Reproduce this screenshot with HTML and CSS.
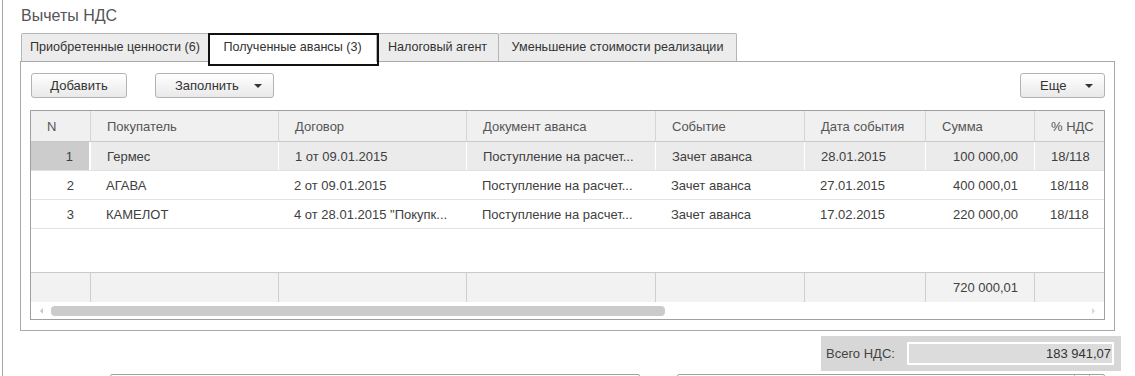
FILE: index.html
```html
<!DOCTYPE html>
<html lang="ru">
<head>
  <meta charset="UTF-8">
  <title>Вычеты НДС</title>
  <link rel="stylesheet" href="styles.css">
</head>
<body>
  <div class="page">
    <h1 class="title">Вычеты НДС</h1>

    <!-- Tabs -->
    <div class="tabs">
      <div class="tab tab-1">Приобретенные ценности (6)</div>
      <div class="tab tab-2 active">Полученные авансы (3)</div>
      <div class="tab tab-3">Налоговый агент</div>
      <div class="tab tab-4">Уменьшение стоимости реализации</div>
    </div>

    <div class="panel">
      <!-- Command bar -->
      <div class="toolbar">
        <button class="btn btn-add">Добавить</button>
        <button class="btn btn-fill">Заполнить <span class="arrow"></span></button>
        <button class="btn btn-more">Еще <span class="arrow"></span></button>
      </div>

      <!-- Advances table -->
      <div class="grid">
        <div class="row head">
          <div class="cell">N</div>
          <div class="cell">Покупатель</div>
          <div class="cell">Договор</div>
          <div class="cell">Документ аванса</div>
          <div class="cell">Событие</div>
          <div class="cell">Дата события</div>
          <div class="cell">Сумма</div>
          <div class="cell">% НДС</div>
        </div>
        <div class="row selected">
          <div class="cell num">1</div>
          <div class="cell">Гермес</div>
          <div class="cell">1 от 09.01.2015</div>
          <div class="cell">Поступление на расчет...</div>
          <div class="cell">Зачет аванса</div>
          <div class="cell">28.01.2015</div>
          <div class="cell num">100 000,00</div>
          <div class="cell">18/118</div>
        </div>
        <div class="row">
          <div class="cell num">2</div>
          <div class="cell">АГАВА</div>
          <div class="cell">2 от 09.01.2015</div>
          <div class="cell">Поступление на расчет...</div>
          <div class="cell">Зачет аванса</div>
          <div class="cell">27.01.2015</div>
          <div class="cell num">400 000,01</div>
          <div class="cell">18/118</div>
        </div>
        <div class="row">
          <div class="cell num">3</div>
          <div class="cell">КАМЕЛОТ</div>
          <div class="cell">4 от 28.01.2015 "Покупк...</div>
          <div class="cell">Поступление на расчет...</div>
          <div class="cell">Зачет аванса</div>
          <div class="cell">17.02.2015</div>
          <div class="cell num">220 000,00</div>
          <div class="cell">18/118</div>
        </div>
        <div class="empty"></div>
        <div class="row foot">
          <div class="cell"></div>
          <div class="cell"></div>
          <div class="cell"></div>
          <div class="cell"></div>
          <div class="cell"></div>
          <div class="cell"></div>
          <div class="cell num">720 000,01</div>
          <div class="cell"></div>
        </div>
        <div class="scrollbar">
          <span class="scroll-left"></span>
          <span class="thumb"></span>
          <span class="scroll-right"></span>
        </div>
      </div>
    </div>

    <!-- Total -->
    <div class="totals">
      <div class="total-box">
        <span class="total-label">Всего НДС:</span>
        <span class="total-value">183 941,07</span>
      </div>
    </div>

    <div class="fields">
      <div class="field field-left"></div>
      <div class="field field-right">
        <span class="field-btn"></span>
        <span class="field-btn"></span>
      </div>
    </div>
  </div>
</body>
</html>
```

FILE: styles.css
```css
/* Global reset */
* {
  margin: 0;
  padding: 0;
  box-sizing: border-box;
}

body {
  font-family: 'Liberation Sans', Arial, sans-serif;
  font-size: 13px;
  color: #404040;
  background: #fff;
  overflow: hidden;
}

.page {
  margin-left: 2px;
  border-left: 1px solid #a6a6a6;
  height: 376px;
  padding: 6px 20px 0 17px;
  overflow: hidden;
}

.title {
  font-size: 16px;
  font-weight: normal;
  line-height: 20px;
  color: #555;
  margin-left: 1px;
}

/* Tabs */
.tabs {
  display: flex;
  margin: 7px 0 0 1px;
  height: 28px;
}

.tab {
  background: #ececec;
  border: 1px solid #b5b5b5;
  border-bottom: none;
  border-left: none;
  border-radius: 2px 2px 0 0;
  font-size: 12.6px;
  line-height: 27px;
  text-align: center;
  color: #333;
  white-space: nowrap;
}

.tab-1 {
  width: 188px;
  border-left: 1px solid #b5b5b5;
}

.tab-2 { width: 168px; }
.tab-3 { width: 122px; }
.tab-4 { width: 238px; }

.tab.active {
  position: relative;
  background: #fff;
  height: 29px;
  z-index: 1;
}

/* focus frame around the current tab */
.tab.active::after {
  content: '';
  position: absolute;
  top: -1px;
  left: -1px;
  right: -3px;
  bottom: -4px;
  border: 2px solid #111;
}

/* Panel */
.panel {
  border: 1px solid #a9a9a9;
  padding: 11px 9px 10px 9px;
}

.toolbar {
  display: flex;
  height: 25px;
  margin: 0 0 12px 1px;
}

.btn {
  font-family: inherit;
  font-size: 13px;
  color: #333;
  height: 25px;
  background: linear-gradient(#ffffff, #e9e9e9);
  border: 1px solid #b3b3b3;
  border-radius: 3px;
  display: flex;
  align-items: center;
}

.btn-add {
  width: 96px;
  justify-content: center;
}

.btn-fill {
  margin-left: 28px;
  width: 119px;
  padding-left: 19px;
}

.btn-more {
  margin-left: auto;
  width: 85px;
  padding-left: 19px;
}

.arrow {
  width: 0;
  height: 0;
  border-left: 4px solid transparent;
  border-right: 4px solid transparent;
  border-top: 4px solid #333;
  margin-left: auto;
  margin-right: 11px;
}

/* Table */
.grid {
  border: 1px solid #a0a0a0;
  height: 210px;
  display: flex;
  flex-direction: column;
}

.row {
  display: grid;
  grid-template-columns: 59px 188px 188px 189px 149px 121px 109px 1fr;
  height: 29px;
  border-bottom: 1px solid #e2e2e2;
}

.cell {
  display: flex;
  align-items: center;
  padding: 0 16px;
  white-space: nowrap;
  overflow: hidden;
}

.cell.num {
  justify-content: flex-end;
}

.head {
  height: 31px;
  background: #f0f0f0;
  border-bottom: 1px solid #c9c9c9;
  color: #555;
}

.head .cell + .cell {
  border-left: 1px solid #d6d6d6;
}

.selected {
  background: #ebebeb;
}

.selected .cell + .cell {
  border-left: 1px solid #fff;
}

.selected .cell:first-child {
  background: #cccccc;
  border-right: 1px solid #fff;
}

.empty {
  height: 43px;
}

.foot {
  height: 30px;
  background: #f2f2f2;
  border-top: 1px solid #cbcbcb;
  border-bottom: none;
}

.foot .cell + .cell {
  border-left: 1px solid #cfcfcf;
}

.scrollbar {
  height: 17px;
  display: flex;
  align-items: center;
  padding: 0 9px 0 9px;
}

.scroll-left {
  width: 0;
  height: 0;
  border-top: 3px solid transparent;
  border-bottom: 3px solid transparent;
  border-right: 3px solid #c8c8c8;
}

.thumb {
  width: 614px;
  height: 10px;
  margin-left: 8px;
  border-radius: 4px;
  background: #cbcbcb;
}

.scroll-right {
  margin-left: auto;
  width: 0;
  height: 0;
  border-top: 3px solid transparent;
  border-bottom: 3px solid transparent;
  border-left: 3px solid #d8d8d8;
}

/* Total */
.totals {
  display: flex;
  justify-content: flex-end;
  margin: 5px -6px 0 0;
}

.total-box {
  width: 300px;
  height: 35px;
  background: #d7d7d7;
  display: flex;
  align-items: center;
  padding: 0 7px 0 5px;
}

.total-label {
  width: 81px;
  color: #444;
}

.total-value {
  flex: 1;
  height: 23px;
  background: #dcdcdc;
  border: 2px solid #fff;
  text-align: right;
  line-height: 19px;
  padding-right: 1px;
  color: #333;
}

.fields {
  display: flex;
  margin-top: 3px;
}

.field {
  height: 20px;
  border: 1px solid #a0a0a0;
  border-radius: 2px;
}

.field-left {
  margin-left: 90px;
  width: 530px;
}

.field-right {
  margin-left: 37px;
  width: 428px;
  display: flex;
  justify-content: flex-end;
}

.field-btn {
  width: 15px;
  border-left: 1px solid #c0c0c0;
}
```
